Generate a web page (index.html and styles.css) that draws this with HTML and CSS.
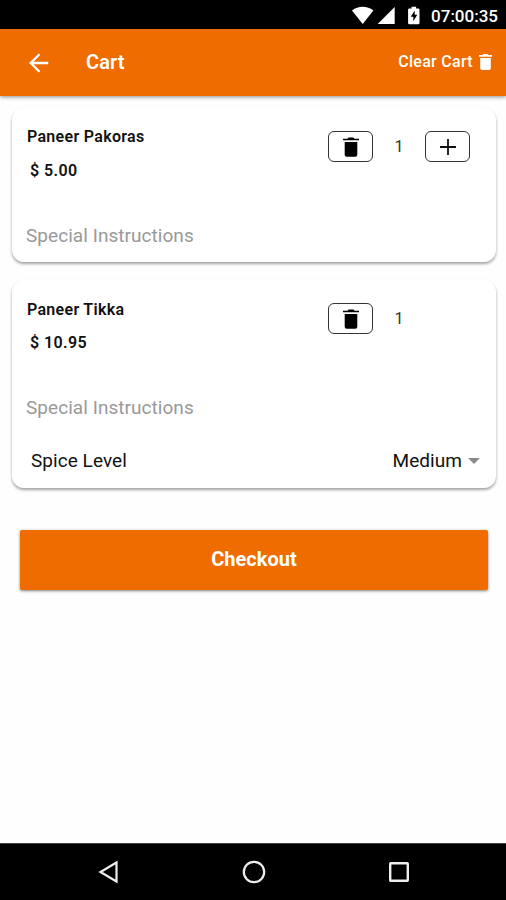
FILE: index.html
```html
<!DOCTYPE html>
<html lang="en">
<head>
<meta charset="utf-8">
<title>Cart</title>
<link rel="stylesheet" href="styles.css">
</head>
<body>
<div class="status">
  <svg class="status-icons" width="70" height="28" viewBox="0 0 70 28" fill="#fff">
    <path d="M0 9.600C6.300 4.600 15 4.600 21.400 9.600L10.700 23Z"/>
    <path d="M25.700 23L42.700 6V23Z"/>
    <path fill-rule="evenodd" d="M59.500 5.800h4.600v1.600h2.200a1.200 1.200 0 0 1 1.200 1.200v13.400a1.200 1.200 0 0 1-1.200 1.200h-9a1.200 1.200 0 0 1-1.200-1.200V8.600a1.200 1.200 0 0 1 1.200-1.200H59.500ZM62.700 9.500l-4 6.300h2.600v4.500l4-6.500h-2.600Z"/>
  </svg>
  <span class="clock">07:00:35</span>
</div>
<header class="appbar">
  <svg class="back" width="20" height="20" viewBox="0 0 20 20" fill="none" stroke="#fff" stroke-width="2.300"><path d="M19.300 10H2M10.500 1.200L1.700 10l8.800 8.800"/></svg>
  <h1 class="title">Cart</h1>
  <div class="clear"><span>Clear Cart</span>
    <svg width="13" height="16" viewBox="0 0 14 18" preserveAspectRatio="none" fill="#fff"><path d="M1.300 4.500h11.400v11.500a2 2 0 0 1-2 2H3.300a2 2 0 0 1-2-2ZM0 1h4l1-1h4l1 1h4v2H0Z"/></svg>
  </div>
</header>
<main class="content">
  <section class="card">
    <div class="item">
      <div class="info"><h2 class="name">Paneer Pakoras</h2><p class="price">$ 5.00</p></div>
      <div class="qty">
        <button class="btn"><svg width="16" height="20" viewBox="0 0 16 20"><path d="M1.700 5h12.600v12.700a2 2 0 0 1-2 2H3.700a2 2 0 0 1-2-2ZM0 1.800h4.500L5.500.600h5l1 1.200H16v1.500H0Z"/></svg></button>
        <span class="count">1</span>
        <button class="btn"><svg width="16" height="16" viewBox="0 0 16 16" fill="none" stroke="#111" stroke-width="1.800"><path d="M0 8h16M8 0v16"/></svg></button>
      </div>
    </div>
    <p class="note">Special Instructions</p>
  </section>
  <section class="card card-tall">
    <div class="item">
      <div class="info"><h2 class="name">Paneer Tikka</h2><p class="price">$ 10.95</p></div>
      <div class="qty">
        <button class="btn"><svg width="16" height="20" viewBox="0 0 16 20"><path d="M1.700 5h12.600v12.700a2 2 0 0 1-2 2H3.700a2 2 0 0 1-2-2ZM0 1.800h4.500L5.500.600h5l1 1.200H16v1.500H0Z"/></svg></button>
        <span class="count">1</span>
        <span class="btn-space"></span>
      </div>
    </div>
    <p class="note">Special Instructions</p>
    <div class="spice"><span>Spice Level</span><span class="select">Medium<svg width="12" height="6" viewBox="0 0 12 6" fill="#8b8b8b"><path d="M0 0h12L6 6Z"/></svg></span></div>
  </section>
  <button class="checkout">Checkout</button>
</main>
<nav class="nav">
  <svg width="22" height="24" viewBox="0 0 22 24" fill="none" stroke="#eee" stroke-width="2.200"><path d="M18.500 2.500V21.500L2.500 12Z"/></svg>
  <svg width="24" height="24" viewBox="0 0 24 24" fill="none" stroke="#eee" stroke-width="2.200"><circle cx="12" cy="12" r="10.200"/></svg>
  <svg width="22" height="24" viewBox="0 0 22 24" fill="none" stroke="#eee" stroke-width="2.400"><rect x="2.200" y="3.200" width="17.600" height="17.600" rx=".5"/></svg>
</nav>
</body>
</html>
```
FILE: styles.css
```css
* { box-sizing: border-box; }
body { margin: 0; height: 900px; display: flex; flex-direction: column; background: #fefefe; color: #111; font-family: Roboto, sans-serif; overflow: hidden; }
h1, h2, p { margin: 0; }
svg { display: block; flex: none; }
button { font-family: inherit; padding: 0; }
.status { height: 29px; flex: none; background: #000; display: flex; align-items: center; justify-content: flex-end; padding-right: 8px; }
.status-icons { margin-right: 9px; }
.clock { color: #fff; font-size: 17px; font-weight: 500; line-height: 20px; padding-top: 3px; }
.appbar { height: 67px; flex: none; background: #ef6c00; color: #fff; display: flex; align-items: center; padding: 0 14px 0 29px; box-shadow: 0 1px 4px rgba(0,0,0,.45); }
.title { margin: -2px 0 0 37px; font-size: 20px; font-weight: 600; line-height: 24px; letter-spacing: .1px; }
.clear { margin-left: auto; display: flex; align-items: center; gap: 6px; font-size: 16px; font-weight: 500; line-height: 20px; letter-spacing: .3px; }
.clear span { margin-top: -1px; }
.clear svg { margin-top: -2px; }
.content { flex: 1; padding: 12px 10px 0 12px; }
.card { height: 154px; border-radius: 12px; background: #fff; box-shadow: 0 2px 3px rgba(0,0,0,.36); margin-bottom: 18px; padding: 18px 16px 0 14px; }
.card-tall { height: 208px; }
.item { display: flex; justify-content: space-between; height: 98px; }
.info { padding-left: 1px; }
.name { font-size: 16px; font-weight: 600; line-height: 22px; letter-spacing: .3px; }
.card-tall .name { padding-top: 1px; margin-bottom: -1px; }
.price { margin: 12px 0 0 3px; font-size: 16px; font-weight: 600; line-height: 22px; letter-spacing: .4px; }
.qty { display: flex; align-items: center; height: 31px; margin: 5px 10px 0 0; }
.btn { width: 45px; height: 31px; border: 1px solid #333; border-radius: 6px; background: #fff; display: grid; place-items: center; }
.btn-space { width: 45px; }
.count { width: 52px; text-align: center; font-size: 16px; color: #333; }
.note { font-size: 19px; line-height: 23px; color: #999; letter-spacing: .05px; }
.spice { display: flex; justify-content: space-between; margin-top: 30px; padding-left: 5px; font-size: 19px; line-height: 24px; letter-spacing: .05px; }
.select { display: flex; align-items: center; gap: 6px; }
.checkout { display: block; width: 468px; height: 60px; margin: 42px 0 0 8px; border: 0; border-radius: 2px; padding-bottom: 2px; background: #ef6c00; color: #fff; font-size: 20px; font-weight: 700; box-shadow: 0 1px 3px rgba(0,0,0,.5); }
.nav { height: 57px; flex: none; background: #000; border-top: 1px solid #444; display: flex; align-items: center; justify-content: space-between; padding: 0 96px 0 98px; }
```
